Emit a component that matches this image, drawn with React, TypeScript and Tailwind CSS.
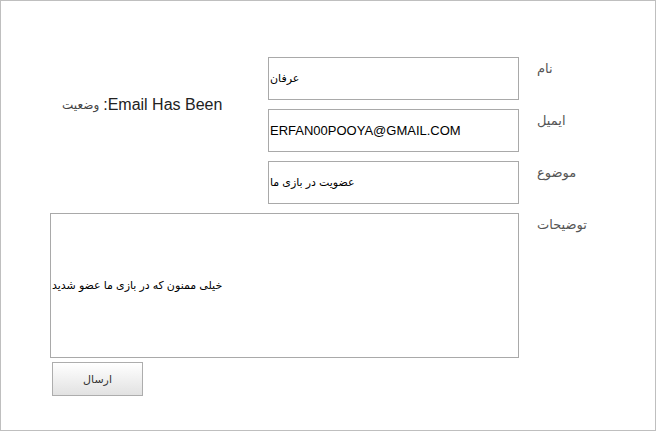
const font = { fontFamily: '"Liberation Sans", "DejaVu Sans", sans-serif' };

const Field = ({ value, small }: { value: string; small?: boolean }) => (
  <div
    className={`flex h-[43px] w-[251px] items-center border border-[#a9a9a9] bg-white pl-[1px] text-black ${
      small ? "text-[11px]" : "text-[13px]"
    }`}
  >
    {value}
  </div>
);

const Label = ({ text }: { text: string }) => (
  <div className="pl-[18px] pt-[2px] text-[13px] text-[#555]">{text}</div>
);

export default function App() {
  return (
    <div style={font} className="h-[431px] w-[656px] border border-[#bfbfbf] bg-white">
      <div className="grid grid-cols-[218px_251px_auto] gap-y-[9px] pl-[49px] pt-[56px]">
        <div className="row-span-2 flex items-center pl-[12px] text-[16px] text-[#222]">
          <span className="mr-[4px] text-[12px] text-[#444]">وضعیت</span>
          <span>:Email Has Been</span>
        </div>
        <Field value="عرفان" small />
        <Label text="نام" />
        <Field value="ERFAN00POOYA@GMAIL.COM" />
        <Label text="ایمیل" />
        <div className="col-start-2">
          <Field value="عضویت در بازی ما" small />
        </div>
        <Label text="موضوع" />
        <div className="col-span-2 flex h-[145px] items-center border border-[#a9a9a9] pl-[1px] text-[11px] text-black">
          خیلی ممنون که در بازی ما عضو شدید
        </div>
        <Label text="توضیحات" />
      </div>
      <div className="pl-[51px] pt-[4px]">
        <button className="h-[34px] w-[91px] border border-[#adadad] bg-gradient-to-b from-white to-[#e2e2e2] text-[11px] text-[#333]">
          ارسال
        </button>
      </div>
    </div>
  );
}
